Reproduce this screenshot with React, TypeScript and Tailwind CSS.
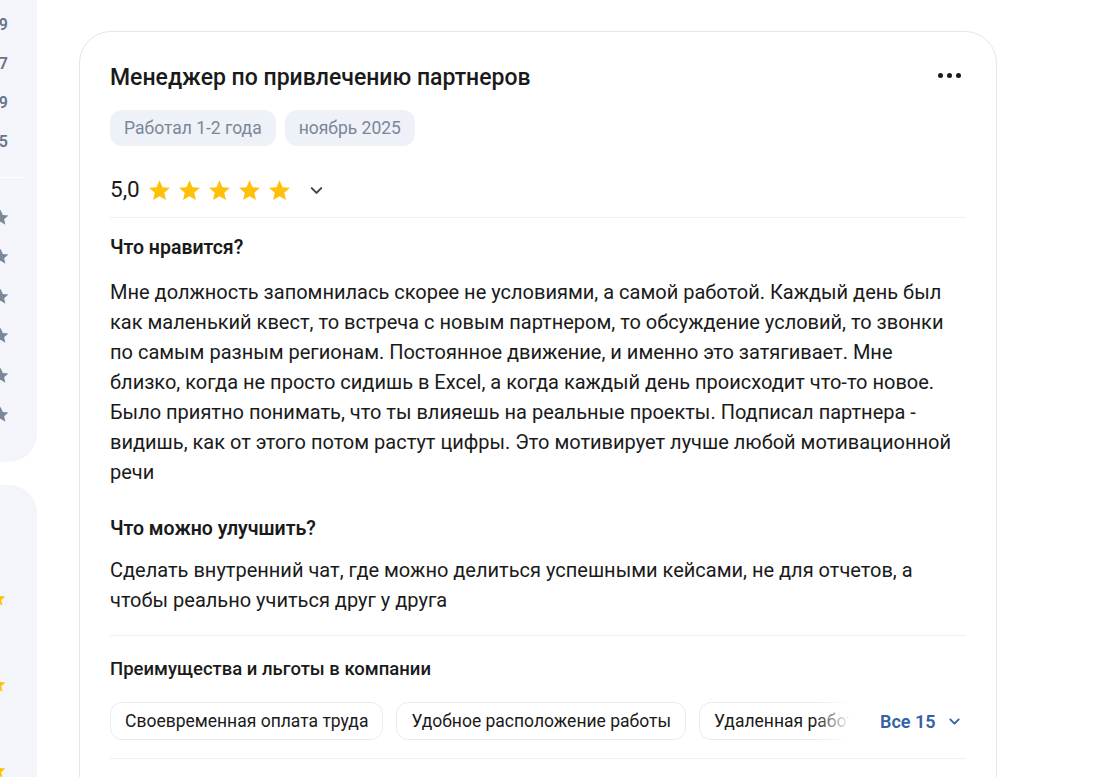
import React from 'react';

// --- Data for the review card ---

const likeText =
  'Мне должность запомнилась скорее не условиями, а самой работой. Каждый день был как маленький квест, то встреча с новым партнером, то обсуждение условий, то звонки по самым разным регионам. Постоянное движение, и именно это затягивает. Мне близко, когда не просто сидишь в Excel, а когда каждый день происходит что-то новое. Было приятно понимать, что ты влияешь на реальные проекты. Подписал партнера - видишь, как от этого потом растут цифры. Это мотивирует лучше любой мотивационной речи';

const improveText =
  'Сделать внутренний чат, где можно делиться успешными кейсами, не для отчетов, а чтобы реально учиться друг у друга';

const benefits = ['Своевременная оплата труда', 'Удобное расположение работы', 'Удаленная работа', 'ДМС'];

const Star = ({ className }: { className: string }) => (
  <svg viewBox="0 0 24 24" className={className} fill="currentColor">
    <path d="M12 2.2l2.9 6.6 7.1.6-5.4 4.7 1.6 7-6.2-3.7-6.2 3.7 1.6-7L2 9.4l7.1-.6z" />
  </svg>
);

const Chevron = ({ className }: { className: string }) => (
  <svg viewBox="0 0 24 24" className={className} fill="none" stroke="currentColor" strokeWidth={2.6} strokeLinecap="round" strokeLinejoin="round">
    <path d="M6 9l6 6 6-6" />
  </svg>
);

const Sidebar = () => (
  <div className="w-[37px] shrink-0 overflow-hidden flex justify-end self-stretch">
    <div className="w-[260px] shrink-0">
      <div className="bg-[#f4f5fa] rounded-b-[28px] pb-[18px]">
        <div className="pt-[13px] flex flex-col items-end pr-[29px] text-[16px] font-semibold text-[#66758a]">
          {['9', '7', '9', '5'].map((n, i) => (
            <div key={i} className="h-[39px] leading-[24px]">{n}</div>
          ))}
        </div>
        <div className="mt-[8px] h-px bg-white mr-[14px]" />
        <div className="pt-[30px] flex flex-col items-end pr-[27px]">
          {[0, 1, 2, 3, 4, 5].map((i) => (
            <div key={i} className="h-[39.4px] shrink-0">
              <Star className="w-[19px] h-[19px] text-[#7a8899]" />
            </div>
          ))}
        </div>
      </div>
      <div className="mt-[23px] bg-[#f4f5fa] rounded-t-[28px] h-[400px] pt-[104px] flex flex-col items-end pr-[30px]">
        {[0, 1, 2].map((i) => (
          <div key={i} className="h-[86px] shrink-0">
            <Star className="w-[19px] h-[19px] text-[#ffc107]" />
          </div>
        ))}
      </div>
    </div>
  </div>
);

export default function App() {
  return (
    <div className="h-[777px] overflow-hidden bg-white flex items-start font-['Roboto',sans-serif]">
      <Sidebar />

      <div className="ml-[42px] mt-[31px] w-[918px] shrink-0 border border-[#e2e6ee] rounded-[32px] px-[30px] pt-[32px] text-[#1a1a1a]">
        <div className="flex items-center justify-between">
          <h2 className="text-[23px] leading-[28px] font-medium text-[#1a1a1a]">Менеджер по привлечению партнеров</h2>
          <div className="flex gap-[4px] mr-[5px] mb-[6px]">
            <span className="w-[5px] h-[5px] rounded-full bg-[#1a1a1a]" />
            <span className="w-[5px] h-[5px] rounded-full bg-[#1a1a1a]" />
            <span className="w-[5px] h-[5px] rounded-full bg-[#1a1a1a]" />
          </div>
        </div>

        <div className="mt-[18px] flex gap-[9px]">
          {['Работал 1-2 года', 'ноябрь 2025'].map((t) => (
            <span key={t} className="h-[36px] px-[14px] flex items-center rounded-[12px] bg-[#eef1f7] text-[17.5px] text-[#7b8798]">
              {t}
            </span>
          ))}
        </div>

        <div className="mt-[28px] flex items-center h-[32px]">
          <span className="text-[22.5px] font-normal mr-[7px]">5,0</span>
          <div className="flex gap-[5px]">
            {[0, 1, 2, 3, 4].map((i) => (
              <Star key={i} className="w-[25px] h-[25px] text-[#ffc107]" />
            ))}
          </div>
          <Chevron className="w-[19px] h-[19px] ml-[15px] text-[#444]" />
        </div>

        <div className="mt-[11px] h-px bg-[#eef0f4]" />

        <h3 className="mt-[18px] text-[19.5px] leading-[24px] font-semibold">Что нравится?</h3>
        <p className="mt-[17px] text-[20px] leading-[30px] text-[#1a1a1a]">{likeText}</p>

        <h3 className="mt-[30px] text-[19.5px] leading-[24px] font-semibold">Что можно улучшить?</h3>
        <p className="mt-[14px] text-[20px] leading-[30px] text-[#1a1a1a]">{improveText}</p>

        <div className="mt-[20px] h-px bg-[#eef0f4]" />

        <h4 className="mt-[22px] text-[18.5px] leading-[22px] font-medium">Преимущества и льготы в компании</h4>

        <div className="mt-[22px] flex items-center">
          <div className="relative w-[740px] overflow-hidden">
            <div className="flex gap-[13px]">
              {benefits.map((b) => (
                <span key={b} className="shrink-0 h-[38px] px-[14px] flex items-center rounded-[12px] border border-[#e8ebf1] text-[17.5px] text-[#1a1a1a] whitespace-nowrap">
                  {b}
                </span>
              ))}
            </div>
            <div className="absolute right-0 top-0 h-full w-[36px] bg-gradient-to-l from-white to-transparent" />
          </div>
          <button className="ml-[30px] flex items-center gap-[10px] text-[18px] font-semibold text-[#3461a6]">
            Все 15
            <Chevron className="w-[17px] h-[17px]" />
          </button>
        </div>

        <div className="mt-[18px] h-px bg-[#eef0f4]" />
        <div className="h-[120px]" />
      </div>
    </div>
  );
}
